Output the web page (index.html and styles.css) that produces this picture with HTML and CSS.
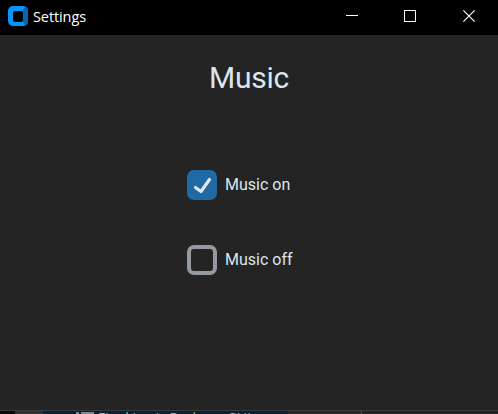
FILE: index.html
```html
<!DOCTYPE html>
<html lang="en">
<head>
<meta charset="utf-8">
<title>Settings</title>
<link rel="stylesheet" href="styles.css">
</head>
<body>
<div class="window">
  <header class="titlebar">
    <svg class="logo" width="20" height="20" viewBox="0 0 20 20">
      <rect width="20" height="20" rx="5" fill="#0696fb"/>
      <path fill="#0766b4" d="M15 4L17 .8Q20 2 20 5V15Q20 18 17.5 19.4L15 16Z"/>
      <rect x="5" y="5" width="10" height="11" rx="2" fill="#000"/>
    </svg>
    <span class="title">Settings</span>
    <div class="controls">
      <svg width="12" height="12" viewBox="0 0 12 12"><path d="M0 5.5H12"/></svg>
      <svg width="12" height="12" viewBox="0 0 12 12"><rect x=".5" y=".5" width="11" height="11"/></svg>
      <svg width="12" height="12" viewBox="0 0 12 12"><path class="close" d="M.4.4L11.6 11.6M11.6.4L.4 11.6"/></svg>
    </div>
  </header>
  <main class="content">
    <h1>Music</h1>
    <div class="option">
      <svg class="box" width="30" height="30" viewBox="0 0 30 30">
        <rect width="30" height="30" rx="7" fill="#1f6aa5"/>
        <path d="M8.5 17.5L14 21.5L22.5 9.5" fill="none" stroke="#e5e5e5" stroke-width="3.2" stroke-linecap="round" stroke-linejoin="round"/>
      </svg>
      <span>Music on</span>
    </div>
    <div class="option">
      <svg class="box" width="30" height="30" viewBox="0 0 30 30">
        <rect x="2" y="2" width="26" height="26" rx="5" fill="none" stroke="#949a9f" stroke-width="4"/>
      </svg>
      <span>Music off</span>
    </div>
  </main>
  <footer class="strip">
    <div class="start"></div>
    <div class="gap"></div>
    <div class="tab"><i class="bar"></i><i class="block"></i><span>Final Logic Package GUI</span></div>
    <div class="rest"></div>
    <div class="end"></div>
  </footer>
</div>
</body>
</html>
```

FILE: styles.css
```css
* { box-sizing: border-box; }
body { margin: 0; background: #242424; overflow: hidden; }
.window { width: 498px; height: 414px; display: flex; flex-direction: column; overflow: hidden; }
.titlebar { height: 35px; background: #000; display: flex; align-items: flex-start; padding: 6px 23px 0 8px; }
.logo { flex: none; }
.title { color: #fff; font: 14.5px/20px "Open Sans", sans-serif; letter-spacing: -0.1px; margin-left: 5px; padding-top: 1px; }
.controls { margin-left: auto; display: flex; gap: 47px; padding-top: 4px; }
.controls svg { fill: none; stroke: #fff; stroke-width: 1; shape-rendering: crispEdges; }
.controls svg:first-child { margin-right: -1px; }
.controls .close { shape-rendering: auto; stroke-width: 1.2; }
.content { height: 375px; flex: none; display: flex; flex-direction: column; }
h1 { margin: 25px 0 74px; text-align: center; font: 400 30px/36px Roboto, sans-serif; letter-spacing: -0.2px; color: #dce4ee; }
.option { display: flex; align-items: center; height: 30px; margin: 0 0 45px 187px; gap: 8px; font: 16px/30px Roboto, sans-serif; color: #dce4ee; }
.box { flex: none; }
.strip { height: 4px; display: flex; border-top: 1px solid #383a3b; overflow: hidden; }
.start { width: 15px; background: #090909; }
.gap { width: 28px; background: #303030; }
.tab { width: 245px; background: #0b2030; display: flex; align-items: flex-start; padding: 1px 0 0 33px; overflow: hidden; }
.bar { width: 3px; height: 3px; background: #7b8994; flex: none; }
.block { width: 13px; height: 3px; background: #7b8994; margin-left: 2px; flex: none; }
.tab span { font: 14px/14px "Open Sans", sans-serif; color: #a5afb6; margin: -1px 0 0 4px; white-space: nowrap; flex: none; }
.rest { width: 74px; background: #292929; border-right: 1px solid #505050; }
.end { flex: 1; background: #222; }
```
